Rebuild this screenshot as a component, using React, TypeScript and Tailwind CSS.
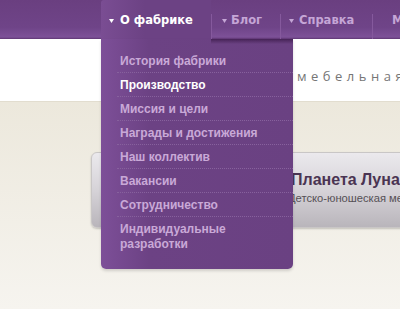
import React from "react";

const items = [
  "История фабрики",
  "Производство",
  "Миссия и цели",
  "Награды и достижения",
  "Наш коллектив",
  "Вакансии",
  "Сотрудничество",
];

function Tri({ light, gap }: { light?: boolean; gap: string }) {
  return (
    <svg width="5" height="4" viewBox="0 0 5 4" className={`${gap} mt-[1px] shrink-0`}>
      <path d="M0 0 L5 0 L2.5 4 Z" fill={light ? "#ffffff" : "#c5a6d6"} />
    </svg>
  );
}

export default function App() {
  return (
    <div className="relative w-[400px] h-[309px] overflow-hidden bg-white flex flex-col">
      {/* nav bar */}
      <div className="h-[39px] shrink-0 flex bg-[linear-gradient(to_bottom,#6a3f80_0%,#6f4488_70%,#7d5198_95%,#5f3673_100%)] pl-[101px] font-['DejaVu_Sans',sans-serif] font-bold text-[11.5px] whitespace-nowrap">
        <div className="w-[110px] shrink-0 h-[39px] flex items-center pl-[8px] pt-[2px] rounded-tl-[3px] bg-[linear-gradient(to_right,#7a4d93,#6c4284_40%)] text-white">
          <Tri light gap="mr-[6px]" />
          <span>О фабрике</span>
        </div>
        <div className="w-[1px] shrink-0 mt-[14px] bg-[#85599d]" />
        <div className="w-[68px] shrink-0 flex items-center pl-[10px] pt-[2px] text-[#c5a6d6]">
          <Tri gap="mr-[4px]" />
          <span>Блог</span>
        </div>
        <div className="w-[1px] shrink-0 mt-[14px] bg-[#85599d]" />
        <div className="w-[91px] shrink-0 flex items-center pl-[8px] pt-[2px] text-[#c5a6d6]">
          <Tri gap="mr-[5px]" />
          <span>Справка</span>
        </div>
        <div className="w-[1px] shrink-0 mt-[14px] bg-[#85599d]" />
        <div className="shrink-0 flex items-center pl-[19px] pt-[2px] text-[#c5a6d6]">
          <span>Мебель</span>
        </div>
      </div>

      {/* white band */}
      <div className="h-[62px] shrink-0 bg-white flex items-start pl-[297px] pt-[28px]">
        <span className="font-['Open_Sans',sans-serif] text-[13px] tracking-[4.5px] text-[#767676] whitespace-nowrap">
          мебельная
        </span>
      </div>

      {/* beige area */}
      <div className="flex-1 border-t border-[#e2ddcf] bg-[linear-gradient(to_bottom,#ece8dc,#f6f4ef)] pt-[50px] pl-[91px]">
        <div className="h-[76px] w-[340px] rounded-[6px] border border-[#c9c6c6] bg-[linear-gradient(to_bottom,#ebe9ed,#d6d3d8_50%,#b9b5bb)] shadow-[0_1px_2px_rgba(0,0,0,0.2)] pl-[199px] pt-[17px] whitespace-nowrap font-['Liberation_Sans',sans-serif]">
          <div className="text-[16px] font-bold text-[#4a3452] leading-[20px]">Планета Луна</div>
          <div className="text-[11.2px] text-[#555055] leading-[16px] -ml-[3px]">Детско-юношеская мебель</div>
        </div>
      </div>

      {/* dropdown */}
      <div className="absolute left-[101px] top-[39px] w-[192px] h-[230px] rounded-b-[5px] bg-[linear-gradient(to_right,#7d4f98,#6c4284_25%,#6a4182)] shadow-[0_2px_3px_rgba(0,0,0,0.15)] font-['Liberation_Sans',sans-serif] font-bold text-[12px]">
        <div className="absolute left-[110px] top-0 right-0 h-[5px] bg-[linear-gradient(to_bottom,rgba(40,10,50,0.55),rgba(40,10,50,0))]" />
        <div className="pt-[10px] pl-[16px]">
          {items.map((t, i) => (
            <div
              key={t}
              className={`h-[24px] flex items-center pl-[3px] border-b border-dotted border-[#87619d] ${
                i === 1 ? "text-white" : "text-[#c9a9d7]"
              }`}
            >
              {t}
            </div>
          ))}
          <div className="pl-[3px] pt-[5px] text-[#c9a9d7] leading-[15px]">
            Индивидуальные
            <br />
            разработки
          </div>
        </div>
      </div>
    </div>
  );
}
